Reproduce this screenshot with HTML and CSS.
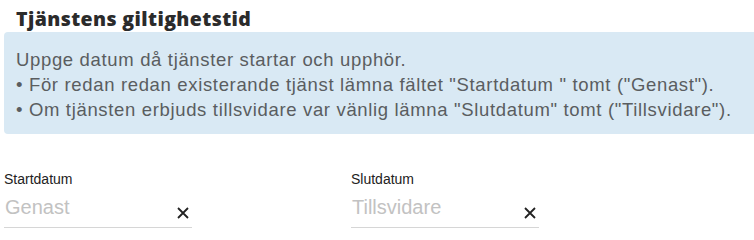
FILE: index.html
```html
<!DOCTYPE html>
<html lang="sv">
<head>
<meta charset="utf-8">
<title>Tjänstens giltighetstid</title>
<link rel="stylesheet" href="styles.css">
</head>
<body>
<div class="page">
  <h2 class="title">Tjänstens giltighetstid</h2>
  <div class="info">
    <p>Uppge datum då tjänster startar och upphör.</p>
    <p>• För redan redan existerande tjänst lämna fältet "Startdatum " tomt ("Genast").</p>
    <p>• Om tjänsten erbjuds tillsvidare var vänlig lämna "Slutdatum" tomt ("Tillsvidare").</p>
  </div>
  <div class="fields">
    <div class="field">
      <label class="label">Startdatum</label>
      <div class="input">
        <span class="placeholder">Genast</span>
        <svg class="clear" width="12" height="12" viewBox="0 0 12 12"><path d="M1 1L11 11M11 1L1 11" stroke="#222" stroke-width="1.8" fill="none"/></svg>
      </div>
    </div>
    <div class="field">
      <label class="label">Slutdatum</label>
      <div class="input">
        <span class="placeholder">Tillsvidare</span>
        <svg class="clear" width="12" height="12" viewBox="0 0 12 12"><path d="M1 1L11 11M11 1L1 11" stroke="#222" stroke-width="1.8" fill="none"/></svg>
      </div>
    </div>
  </div>
</div>
</body>
</html>
```
FILE: styles.css
```css
html, body {
  margin: 0;
  padding: 0;
  background: #fff;
  overflow: hidden;
}
.page {
  padding: 6px 0 0 4px;
  font-family: "Liberation Sans", Arial, sans-serif;
}
.title {
  margin: 0 0 0 12px;
  font-family: "Open Sans", "Liberation Sans", sans-serif;
  font-weight: 800;
  font-size: 19.5px;
  line-height: 26px;
  letter-spacing: 0.4px;
  color: #2b2b2b;
}
.info {
  margin-right: -10px;
  background: #d9e9f4;
  border-radius: 4px;
  padding: 15px 12px 12px 12px;
  color: #5a5d60;
  font-size: 18.5px;
  letter-spacing: 0.66px;
  line-height: 25px;
}
.info p {
  margin: 0;
}
.fields {
  display: grid;
  grid-template-columns: 347px 347px;
  margin-top: 37px;
}
.field {
  display: flex;
  flex-direction: column;
}
.label {
  font-size: 14px;
  line-height: 16px;
  color: #222;
}
.input {
  width: 188px;
  height: 41px;
  box-sizing: border-box;
  border-bottom: 1px solid #d6d6d6;
  display: flex;
  align-items: flex-end;
  justify-content: space-between;
  padding: 0 3px 8px 1px;
}
.placeholder {
  font-size: 20px;
  line-height: 23px;
  color: #c2c2c2;
}
.clear {
  display: block;
}
```
